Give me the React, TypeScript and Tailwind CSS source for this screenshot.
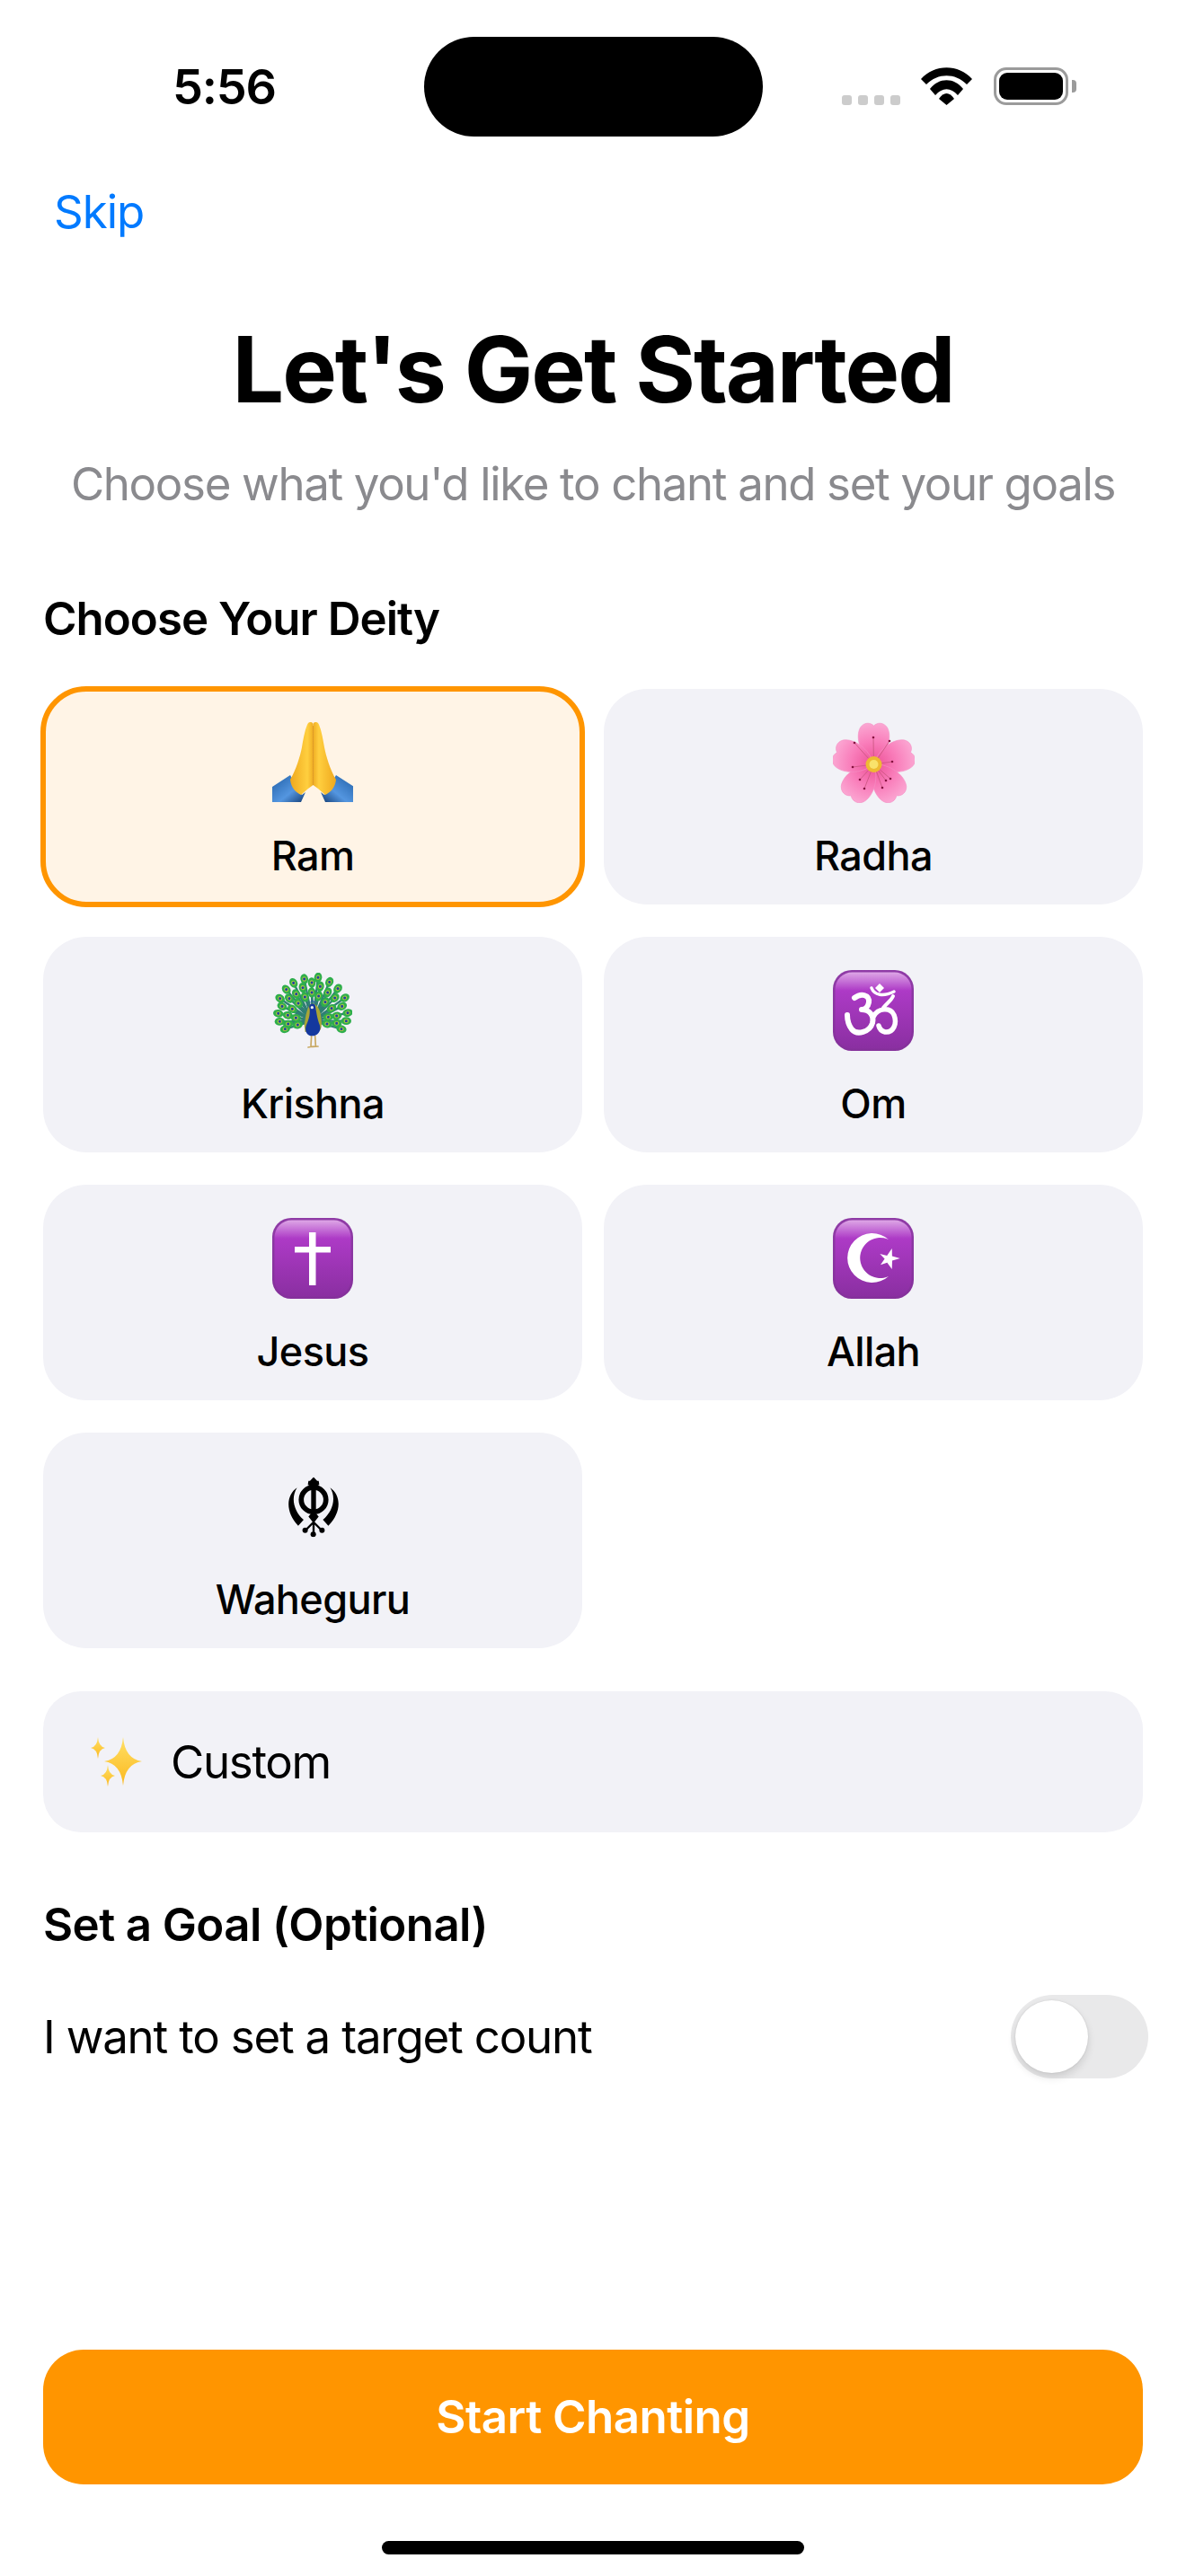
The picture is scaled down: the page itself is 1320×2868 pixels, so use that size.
import React, { useId } from 'react';

// purple "symbol" tile shared by the om, cross and crescent emoji
const PurpleTile = ({ children }: { children: React.ReactNode }) => {
  const id = useId();
  return (
    <svg width="90" height="90" viewBox="0 0 90 90">
      <defs>
        <linearGradient id={`${id}a`} x1="0" y1="0" x2="0" y2="1">
          <stop offset="0" stopColor="#8f3ba6" />
          <stop offset="1" stopColor="#85309b" />
        </linearGradient>
        <linearGradient id={`${id}b`} x1="0" y1="0" x2="0" y2="1">
          <stop offset="0" stopColor="#dda6e6" />
          <stop offset="0.24" stopColor="#ad3ac6" />
          <stop offset="1" stopColor="#8a2fa1" />
        </linearGradient>
      </defs>
      <rect width="90" height="90" rx="21" fill={`url(#${id}a)`} />
      <rect x="2.5" y="2.5" width="85" height="85" rx="19" fill={`url(#${id}b)`} />
      {children}
    </svg>
  );
};

const PrayEmoji = () => (
  <svg width="90" height="90" viewBox="0 0 90 90">
    <defs>
      <linearGradient id="hand" x1="0" y1="0" x2="1" y2="0">
        <stop offset="0" stopColor="#efa81e" />
        <stop offset="0.75" stopColor="#ffcf3f" />
        <stop offset="1" stopColor="#f0ae24" />
      </linearGradient>
      <linearGradient id="sleeve" x1="0" y1="0" x2="1" y2="1">
        <stop offset="0" stopColor="#205fa6" />
        <stop offset="0.6" stopColor="#5496e0" />
        <stop offset="1" stopColor="#123c74" />
      </linearGradient>
    </defs>
    {[false, true].map((flip) => (
      <g key={String(flip)} transform={flip ? 'matrix(-1 0 0 1 91 0)' : undefined}>
        <path d="M0 72 L20 59 L33 81 L37 78 L32 89 L0 89 Z" fill="url(#sleeve)" />
        <path d="M40 1 C42 -0.5 44.5 -0.5 45.5 2 L45.5 70 L40 74 L32 81 C26 78 21 73 20 64 C27 52 31 38 33 28 C35 16 37 6 40 1 Z" fill="url(#hand)" />
      </g>
    ))}
    <line x1="45.5" y1="4" x2="45.5" y2="70" stroke="#d9921c" strokeWidth="0.8" />
  </svg>
);

const stamens: [number, number][] = [
  [45, 17], [24, 23], [63, 21], [66, 44], [22, 50], [30, 64], [35, 74], [59, 65], [64, 63], [55, 73],
];

const BlossomEmoji = () => (
  <svg width="91" height="90" viewBox="0 0 91 90">
    <defs>
      <radialGradient id="petal" gradientUnits="userSpaceOnUse" cx="0" cy="0" r="46">
        <stop offset="0" stopColor="#ec4f95" />
        <stop offset="0.55" stopColor="#f97dba" />
        <stop offset="1" stopColor="#fba6d2" />
      </radialGradient>
    </defs>
    <g transform="translate(45.5 47)">
      {[0, 72, 144, 216, 288].map((deg) => (
        <path
          key={deg}
          transform={`rotate(${deg})`}
          d="M0 0 C-15 -10 -21 -30 -15 -41 C-11 -47 -4 -47 0 -43 C4 -47 11 -47 15 -41 C21 -30 15 -10 0 0 Z"
          fill="url(#petal)"
          stroke="#f48fc4"
          strokeWidth="0.6"
        />
      ))}
    </g>
    {stamens.map(([x, y]) => (
      <g key={`${x}-${y}`}>
        <line x1="45.5" y1="47" x2={x} y2={y} stroke="#c9557f" strokeWidth="0.8" />
        <circle cx={x} cy={y} r="1.3" fill="#85123f" />
      </g>
    ))}
    <circle cx="45.5" cy="47" r="9" fill="#eeba32" />
    <circle cx="45.5" cy="47" r="5" fill="#f9e26b" />
  </svg>
);

// feather eyes, read off the reference at 3x
const feathers: [number, number][] = [
  [292, 95], [338, 90], [256, 108], [376, 105], [232, 130], [404, 127], [211, 160], [427, 158], [218, 186], [418, 186],
  [205, 210], [437, 208], [210, 237], [432, 235], [228, 262], [416, 262], [317, 107], [287, 124], [345, 120], [265, 145],
  [370, 140], [242, 160], [394, 158], [252, 195], [383, 193], [237, 216], [400, 218], [238, 245], [400, 243], [270, 248],
  [368, 245], [317, 140], [294, 155], [340, 152], [272, 176], [362, 172], [264, 225], [372, 222],
];

const PeacockEmoji = () => (
  <svg width="88" height="85" viewBox="188 75 264 253">
    {feathers.map(([x, y]) => (
      <line key={`l${x}${y}`} x1="320" y1="235" x2={x} y2={y} stroke="#2f7f73" strokeWidth="7" />
    ))}
    {feathers.map(([x, y]) => {
      const deg = (Math.atan2(y - 235, x - 320) * 180) / Math.PI + 90;
      return (
        <g key={`f${x}${y}`} transform={`translate(${x} ${y}) rotate(${deg})`}>
          <ellipse rx="13" ry="17" fill="#2fae4c" />
          <ellipse rx="7" ry="8" fill="#a8c83c" />
          <circle r="4.5" fill="#1f3fa8" />
        </g>
      );
    })}
    <path d="M316 285 L314 318 M328 285 L330 318 M305 323 L322 320 M320 321 L338 320" stroke="#c9a964" strokeWidth="5" strokeLinecap="round" fill="none" />
    <path d="M292 250 C296 220 300 195 312 180 C325 172 340 185 346 210 C350 235 352 255 345 265 L295 272 Z" fill="#a9a636" />
    <path d="M310 195 C304 180 318 172 328 182 C332 200 334 225 344 250 C350 270 335 285 318 285 C302 285 292 270 298 250 C306 235 312 215 310 195 Z" fill="#14389e" />
    <circle cx="318" cy="190" r="5" fill="#e8edf5" />
    <path d="M312 173 L318 168 L328 173" stroke="#1a4fb0" strokeWidth="3" fill="none" />
  </svg>
);

const OmEmoji = () => (
  <PurpleTile>
    <g fill="none" stroke="#fff" strokeLinecap="round" strokeLinejoin="round">
      <path d="M24 31 C32 25 41 28 40 36 C39 42 35 44 32 44 C41 44 46 51 44 59 C41 69 27 73 21 66 C18 62 16 57 16 50" strokeWidth="6" />
      <path d="M45 52 C50 42 64 41 68 50 C72 60 67 70 58 69 C54 68 52 66 51 62" strokeWidth="5.5" />
      <path d="M56 42 C60 37 65 34 67 29" strokeWidth="4" />
      <path d="M43 20 C46 28 56 30 68 24" strokeWidth="3.5" />
    </g>
    <path d="M52 15 L57 20 L52 25 L47 20 Z" fill="#fff" />
  </PurpleTile>
);

const CrossEmoji = () => (
  <PurpleTile>
    <rect x="41" y="16" width="7.5" height="59" fill="#fff" />
    <rect x="25" y="32" width="40" height="6.5" fill="#fff" />
  </PurpleTile>
);

const CrescentEmoji = () => (
  <PurpleTile>
    <path d="M62 24 A27.5 27.5 0 1 0 62 65 A22.5 22.5 0 1 1 62 24 Z" fill="#fff" />
    <polygon points="74.7,45 66,47.6 65.7,57 60.4,49.7 53,52.3 57.6,45.4 52.3,40 60.2,42 65.7,34 65.9,42.6" fill="#fff" />
  </PurpleTile>
);

const KhandaEmoji = () => (
  <svg width="90" height="90" viewBox="0 0 90 90">
    <g transform="translate(17.5 12.5)">
      <svg width="57" height="67" viewBox="238 75 170 200">
        <circle cx="323" cy="150" r="41" fill="none" stroke="#000" strokeWidth="17" />
        <path d="M323 75 L335 88 L340 88 L342 100 L331 106 L331 196 L340 206 L323 228 L306 206 L315 196 L315 106 L304 100 L306 88 L311 88 Z" fill="#000" />
        <path d="M268 110 C232 135 228 190 272 237 L290 217 C258 190 246 145 268 110 Z" fill="#000" />
        <path d="M378 110 C414 135 418 190 372 237 L354 217 C386 190 400 145 378 110 Z" fill="#000" />
        <path d="M323 225 L296 252 M323 225 L350 252 M323 225 L323 265" stroke="#000" strokeWidth="7" />
        <circle cx="295" cy="252" r="9" fill="#000" />
        <circle cx="351" cy="252" r="9" fill="#000" />
        <circle cx="322" cy="265" r="9" fill="#000" />
      </svg>
    </g>
  </svg>
);

const SparkleEmoji = () => {
  const star = (cx: number, cy: number, w: number, h: number) => {
    const k = 0.1;
    const dx = w * k;
    const dy = h * k;
    return `M${cx} ${cy - h} Q${cx + dx} ${cy - dy} ${cx + w} ${cy} Q${cx + dx} ${cy + dy} ${cx} ${cy + h} Q${cx - dx} ${cy + dy} ${cx - w} ${cy} Q${cx - dx} ${cy - dy} ${cx} ${cy - h} Z`;
  };
  return (
    <svg width="57" height="55" viewBox="0 0 57 55">
      <defs>
        <linearGradient id="spark" x1="0" y1="0" x2="0" y2="1">
          <stop offset="0" stopColor="#ffe066" />
          <stop offset="1" stopColor="#fbb81f" />
        </linearGradient>
      </defs>
      <path d={star(36, 27, 21, 27)} fill="url(#spark)" />
      <path d={star(8, 12, 8, 12)} fill="url(#spark)" />
      <path d={star(19, 43, 8, 12)} fill="url(#spark)" />
    </svg>
  );
};

const Wifi = () => (
  <svg width="57" height="42" viewBox="0 0 57 42" fill="#000">
    <path d="M0 13 C15 -4 42 -4 57 13 L51 19 C38 6 19 6 6 19 Z" />
    <path d="M10 24 C20 11 37 11 47 24 L41 31 C33 22 24 22 16 31 Z" />
    <path d="M20 35 C25 27 32 27 37 35 L28.5 42 Z" />
  </svg>
);

const StatusBar = () => (
  <div className="relative h-[206px] pt-[68px] shrink-0">
    <div className="absolute left-[472px] top-[41px] w-[377px] h-[111px] rounded-full bg-black" />
    <div className="flex items-start">
      <span className="ml-[192px] text-[54px] leading-[58px] font-semibold tracking-[-1.2px] text-black">5:56</span>
      <div className="ml-auto mr-[122px] mt-[7px] flex items-end">
        <div className="flex gap-[7px]">
          {[0, 1, 2, 3].map((i) => (
            <div key={i} className="w-[11px] h-[11px] rounded-[3px] bg-[#cccccc]" />
          ))}
        </div>
        <div className="ml-[23px]">
          <Wifi />
        </div>
        <div className="ml-[24px] flex items-center">
          <div className="w-[83px] h-[42px] rounded-[14px] border-[3px] border-[#9b9b9b] p-[3px]">
            <div className="w-full h-full rounded-[9px] bg-black" />
          </div>
          <div className="ml-[4px] w-[5px] h-[14px] rounded-r-[4px] bg-[#9b9b9b]" />
        </div>
      </div>
    </div>
  </div>
);

const deities = [
  { name: 'Ram', icon: <PrayEmoji />, selected: true },
  { name: 'Radha', icon: <BlossomEmoji /> },
  { name: 'Krishna', icon: <PeacockEmoji /> },
  { name: 'Om', icon: <OmEmoji /> },
  { name: 'Jesus', icon: <CrossEmoji /> },
  { name: 'Allah', icon: <CrescentEmoji /> },
  { name: 'Waheguru', icon: <KhandaEmoji /> },
];

const DeityCard = ({ name, icon, selected }: { name: string; icon: React.ReactNode; selected?: boolean }) => (
  <div
    className={`h-[240px] rounded-[48px] pt-[37px] flex flex-col items-center ${
      selected ? 'bg-[#fff4e6] outline-6 outline-offset-[-3px] outline-[#ff9500]' : 'bg-[#f2f2f7]'
    }`}
  >
    <div className="h-[90px] flex items-center justify-center">{icon}</div>
    <span className="mt-[32px] text-[45px] leading-[54px] font-medium tracking-[-0.6px] text-black">{name}</span>
  </div>
);

export default function App() {
  return (
    <div className="w-[1320px] h-[2868px] bg-white flex flex-col font-[Inter,sans-serif] overflow-hidden">
      <StatusBar />

      <div className="px-[48px] flex-1 flex flex-col">
        <button className="self-start ml-[12px] text-[51px] leading-[60px] tracking-[-1px] text-[#007aff]">Skip</button>

        <h1 className="mt-[85px] text-center text-[102px] leading-[120px] font-bold tracking-[-2.1px] text-black">Let's Get Started</h1>
        <p className="mt-[38px] -mx-[20px] text-center text-[51px] leading-[60px] tracking-[-1.35px] text-[#8a8a8e]">
          Choose what you'd like to chant and set your goals
        </p>

        <h2 className="mt-[90px] text-[51px] leading-[60px] font-semibold tracking-[-1px] text-black">Choose Your Deity</h2>
        <div className="mt-[48px] grid grid-cols-2 gap-x-[24px] gap-y-[36px]">
          {deities.map((d) => (
            <DeityCard key={d.name} {...d} />
          ))}
        </div>

        <div className="mt-[48px] h-[157px] rounded-[42px] bg-[#f2f2f7] pl-[53px] flex items-center">
          <SparkleEmoji />
          <span className="ml-[32px] text-[51px] leading-[60px] tracking-[-1.3px] text-black">Custom</span>
        </div>

        <h2 className="mt-[73px] text-[51px] leading-[60px] font-semibold tracking-[-0.6px] text-black">Set a Goal (Optional)</h2>
        <div className="mt-[48px] flex items-center justify-between">
          <span className="text-[51px] leading-[60px] tracking-[-1.2px] text-black">I want to set a target count</span>
          <div className="-mr-[6px] w-[153px] h-[93px] rounded-full bg-[#e9e9ea] pl-[5px] flex items-center">
            <div className="w-[81px] h-[81px] rounded-full bg-white shadow-[0_5px_10px_rgba(0,0,0,0.12),0_0_2px_rgba(0,0,0,0.12)]" />
          </div>
        </div>

        <button className="mt-auto h-[150px] rounded-[45px] bg-[#ff9500] text-white text-[51px] font-semibold tracking-[-0.5px]">
          Start Chanting
        </button>
        <div className="mt-[63px] mb-[24px] mx-auto w-[470px] h-[15px] rounded-full bg-black" />
      </div>
    </div>
  );
}
